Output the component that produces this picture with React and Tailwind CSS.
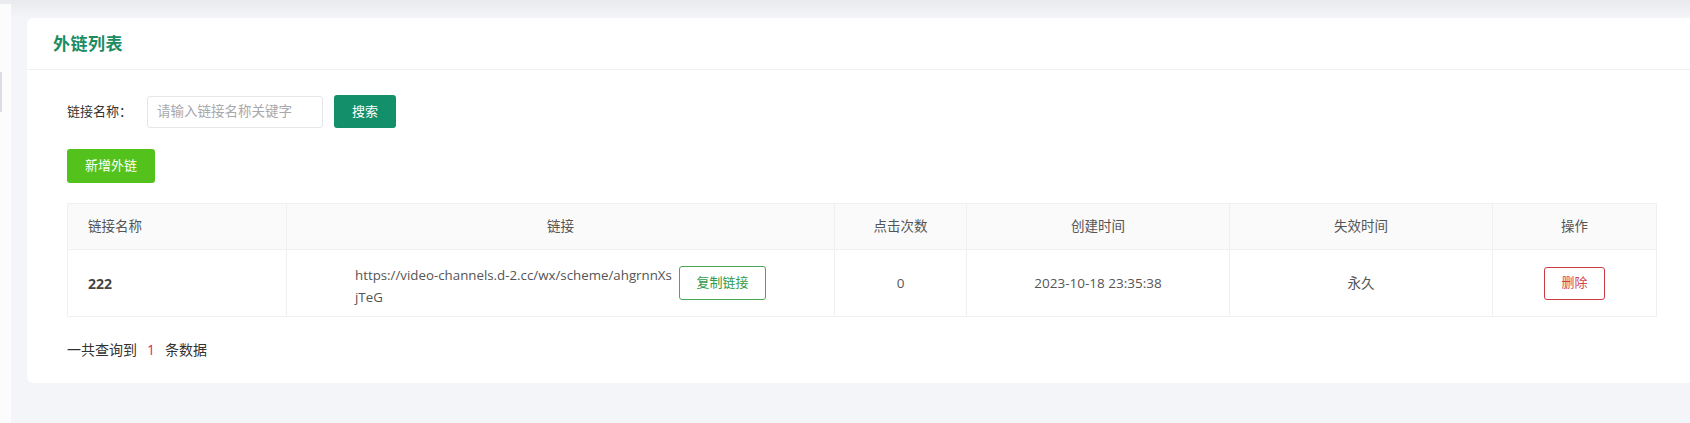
import React from "react";

const F = { fontFamily: '"Open Sans", "Noto Sans CJK SC", sans-serif' };

export default function App() {
  return (
    <div
      className="w-[1690px] h-[423px] bg-[#f4f5f9] overflow-hidden flex flex-col"
      style={F}
    >
      <div className="h-[18px] shrink-0 bg-gradient-to-b from-[#e9eaee] via-[#eff0f3] to-[#f4f5f9]" />
      <div className="flex flex-1 min-h-0">
        <div className="w-[11px] shrink-0 bg-[#fcfcfd] -mt-[14px]">
          <div className="w-[2px] h-[40px] mt-[68px] bg-[#dcdde2]" />
        </div>
        <div className="ml-[16px] w-[1700px] shrink-0">
          <div className="bg-white rounded-l-[6px] h-[365px] flex flex-col">
            <div className="h-[52px] shrink-0 flex items-center px-[26px] border-b border-[#f0f0f2]">
              <span className="text-[17px] font-bold text-[#1b8c62] tracking-[0.5px]">外链列表</span>
            </div>
            <div className="pl-[40px] pt-[25px]">
              <div className="flex items-center h-[33px]">
                <span className="text-[13px] text-[#333] w-[80px]">链接名称：</span>
                <div className="w-[176px] h-[32px] border border-[#e5e6ea] rounded-[3px] flex items-center pl-[9px] text-[13.5px] text-[#a8a8ad]">
                  请输入链接名称关键字
                </div>
                <button className="ml-[11px] w-[62px] h-[33px] rounded-[3px] bg-[#138f6a] text-white text-[13px]">
                  搜索
                </button>
              </div>
              <button className="mt-[21px] w-[88px] h-[34px] rounded-[3px] bg-[#53c21d] text-white text-[13px]">
                新增外链
              </button>
              <div className="mt-[20px] w-[1590px] border border-[#f0f0f0] text-[#555]">
                <div className="flex h-[46px] bg-[#fafafa] border-b border-[#f0f0f0] text-[13.5px]">
                  <div className="w-[219px] shrink-0 flex items-center pl-[20px] border-r border-[#f0f0f0]">链接名称</div>
                  <div className="w-[548px] shrink-0 flex items-center justify-center border-r border-[#f0f0f0]">链接</div>
                  <div className="w-[132px] shrink-0 flex items-center justify-center border-r border-[#f0f0f0]">点击次数</div>
                  <div className="w-[263px] shrink-0 flex items-center justify-center border-r border-[#f0f0f0]">创建时间</div>
                  <div className="w-[263px] shrink-0 flex items-center justify-center border-r border-[#f0f0f0]">失效时间</div>
                  <div className="flex-1 flex items-center justify-center">操作</div>
                </div>
                <div className="flex h-[66px] text-[13.5px]">
                  <div className="w-[219px] shrink-0 flex items-center pl-[20px] border-r border-[#f0f0f0] font-bold text-[#444] text-[14px]">222</div>
                  <div className="w-[548px] shrink-0 flex items-center justify-center border-r border-[#f0f0f0]">
                    <div className="w-[318px] pt-[6px] leading-[22px] text-[13.3px] whitespace-nowrap">
                      https://video-channels.d-2.cc/wx/scheme/ahgrnnXs
                      <br />
                      jTeG
                    </div>
                    <button className="ml-[6px] w-[87px] h-[34px] shrink-0 rounded-[3px] border border-[#4aa85a] text-[#2f9a47] text-[13px] bg-white">
                      复制链接
                    </button>
                  </div>
                  <div className="w-[132px] shrink-0 flex items-center justify-center border-r border-[#f0f0f0]">0</div>
                  <div className="w-[263px] shrink-0 flex items-center justify-center border-r border-[#f0f0f0]">2023-10-18 23:35:38</div>
                  <div className="w-[263px] shrink-0 flex items-center justify-center border-r border-[#f0f0f0]">永久</div>
                  <div className="flex-1 flex items-center justify-center">
                    <button className="w-[61px] h-[33px] rounded-[3px] border border-[#cc3b45] text-[#d2454f] text-[13px] bg-white">
                      删除
                    </button>
                  </div>
                </div>
              </div>
              <div className="mt-[22px] text-[14px] text-[#333] flex items-center">
                <span>一共查询到</span>
                <span className="mx-[10px] text-[#dc1f5e]">1</span>
                <span>条数据</span>
              </div>
            </div>
          </div>
        </div>
      </div>
    </div>
  );
}
